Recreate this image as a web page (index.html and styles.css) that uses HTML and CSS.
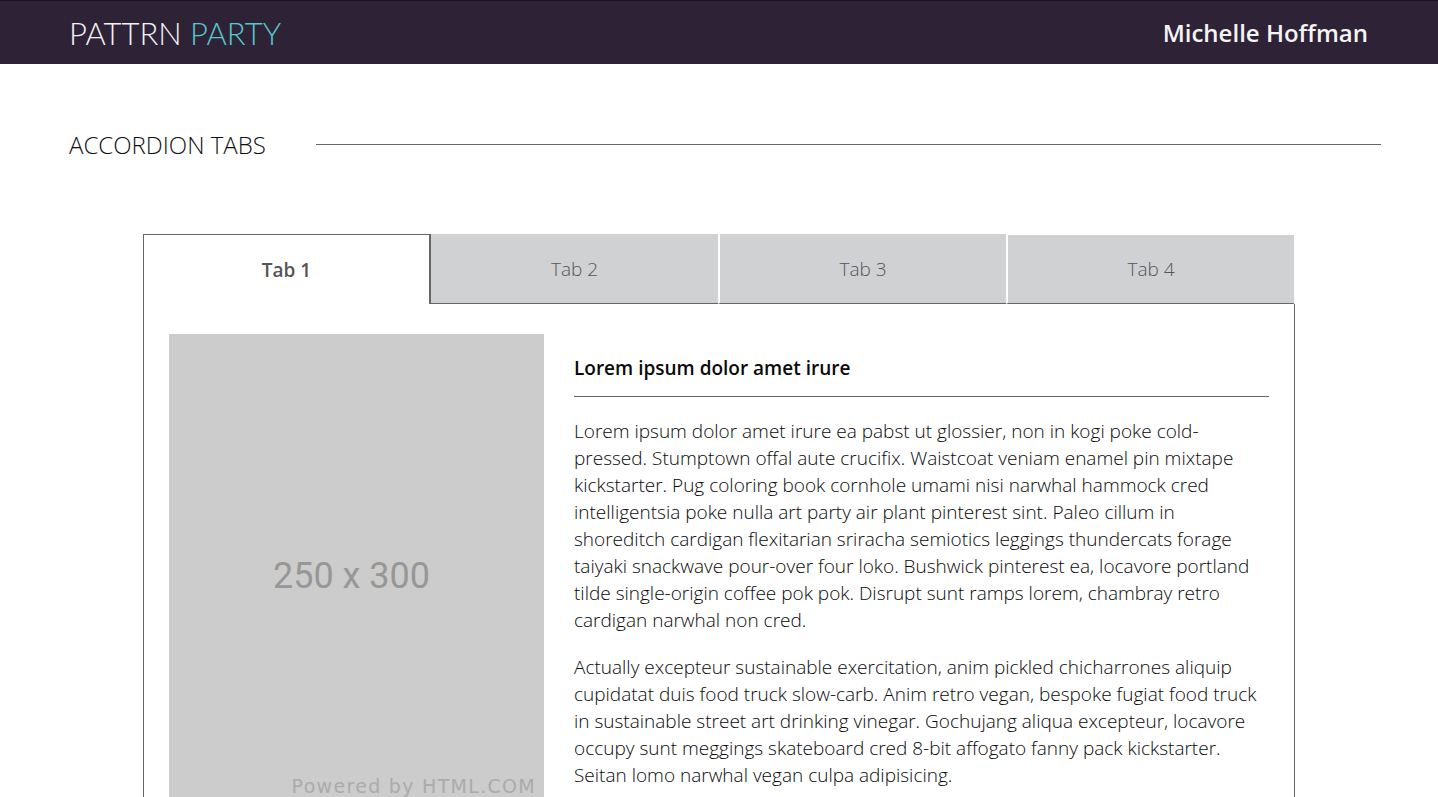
FILE: index.html
```html
<!DOCTYPE html>
<html lang="en">
<head>
<meta charset="utf-8">
<title>Pattrn Party - Accordion Tabs</title>
<link rel="stylesheet" href="styles.css">
</head>
<body>
<header class="topbar">
  <div class="brand">PATTRN <span class="brand-accent">PARTY</span></div>
  <div class="user">Michelle Hoffman</div>
</header>
<main class="page">
  <div class="section-title">
    <h1>ACCORDION TABS</h1>
    <span class="rule"></span>
  </div>
  <div class="tabs">
    <ul class="tab-list">
      <li class="tab active">Tab 1</li>
      <li class="tab">Tab 2</li>
      <li class="tab">Tab 3</li>
      <li class="tab">Tab 4</li>
    </ul>
    <div class="panel">
      <div class="placeholder">
        <span class="ph-size">250 x 300</span>
        <span class="ph-credit">Powered by HTML.COM</span>
      </div>
      <div class="copy">
        <h2>Lorem ipsum dolor amet irure</h2>
        <p>Lorem ipsum dolor amet irure ea pabst ut glossier, non in kogi poke cold-pressed. Stumptown offal aute crucifix. Waistcoat veniam enamel pin mixtape kickstarter. Pug coloring book cornhole umami nisi narwhal hammock cred intelligentsia poke nulla art party air plant pinterest sint. Paleo cillum in shoreditch cardigan flexitarian sriracha semiotics leggings thundercats forage taiyaki snackwave pour-over four loko. Bushwick pinterest ea, locavore portland tilde single-origin coffee pok pok. Disrupt sunt ramps lorem, chambray retro cardigan narwhal non cred.</p>
        <p>Actually excepteur sustainable exercitation, anim pickled chicharrones aliquip cupidatat duis food truck slow-carb. Anim retro vegan, bespoke fugiat food truck in sustainable street art drinking vinegar. Gochujang aliqua excepteur, locavore occupy sunt meggings skateboard cred 8-bit affogato fanny pack kickstarter. Seitan lomo narwhal vegan culpa adipisicing.</p>
      </div>
    </div>
  </div>
</main>
</body>
</html>
```

FILE: styles.css
```css
* { box-sizing: border-box; }
html, body { margin: 0; padding: 0; }
body {
  font-family: "Open Sans", "Liberation Sans", sans-serif;
  background: #fff;
  color: #111;
  overflow: hidden;
}
.topbar {
  height: 64px;
  background: #2e2336;
  border-top: 1px solid #1a141f;
  display: flex;
  align-items: center;
  justify-content: space-between;
  padding: 0 70px 0 69px;
}
.brand {
  font-family: "Lato", "Open Sans", sans-serif;
  font-weight: 300;
  font-size: 31px;
  color: #f2f2f2;
}
.brand-accent { color: #56c7cb; }
.user {
  font-weight: 600;
  font-size: 24px;
  color: #f4f4f4;
}
.page { padding: 0 57px 0 69px; }
.section-title {
  display: flex;
  align-items: center;
  height: 160px;
}
.section-title h1 {
  margin: 0;
  font-weight: 300;
  font-size: 24px;
  color: #111;
  width: 247px;
  flex: none;
}
.rule {
  flex: 1;
  height: 1px;
  background: #666;
  margin-top: 1px;
}
.tabs {
  margin: 10px 0 0 74px;
  width: 1152px;
}
.tab-list {
  list-style: none;
  margin: 0;
  padding: 0;
  display: flex;
}
.tab {
  width: 288px;
  height: 70px;
  display: flex;
  align-items: center;
  justify-content: center;
  background: #d0d1d3;
  color: #555;
  font-size: 19px;
  font-weight: 300;
  border-bottom: 1px solid #666;
  border-left: 2px solid #fff;
}
.tab:nth-child(2) { border-left: 1px solid #666; }
.tab.active {
  background: #fff;
  font-weight: 600;
  border: 1px solid #666;
  border-bottom: none;
  width: 287px;
}
.tab:last-child { border-top: 1px solid #fff; }
.panel {
  border: 1px solid #666;
  border-top: none;
  display: flex;
  gap: 30px;
  padding: 30px 25px 40px 25px;
  height: 520px;
}
.placeholder {
  width: 375px;
  height: 484px;
  flex: none;
  background: #cccccc;
  position: relative;
  display: flex;
  align-items: center;
  justify-content: center;
  font-family: "Roboto", "Liberation Sans", sans-serif;
}
.ph-size {
  font-size: 36px;
  color: #979797;
  margin-right: 10px;
}
.ph-credit {
  position: absolute;
  right: 8px;
  bottom: 21px;
  font-family: "DejaVu Sans", sans-serif;
  font-size: 19px;
  color: #ababab;
  letter-spacing: 1.3px;
}
.copy { flex: 1; }
.copy h2 {
  margin: 22px 0 0;
  font-size: 19px;
  font-weight: 600;
  color: #0a0a0a;
  padding-bottom: 15px;
  border-bottom: 1px solid #666;
  line-height: 25px;
}
.copy p {
  margin: 21px 0 0;
  font-size: 19px;
  font-weight: 300;
  line-height: 27px;
  color: #0a0a0a;
}
.copy p + p { margin-top: 20px; }
```
